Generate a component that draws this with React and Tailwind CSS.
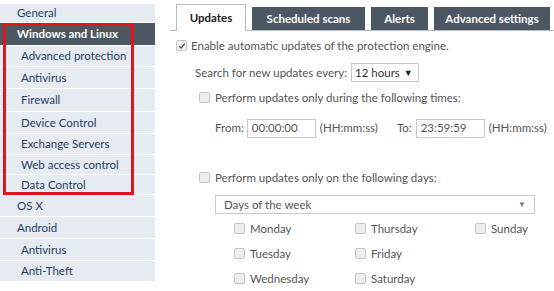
import React from "react";

const navItems = [
  { label: "General", h: 18, indent: "pl-[17px]" },
  { label: "Windows and Linux", h: 22, indent: "pl-[17px]", active: true },
  { label: "Advanced protection", h: 20, indent: "pl-[21px]" },
  { label: "Antivirus", h: 21, indent: "pl-[21px]" },
  { label: "Firewall", h: 22, indent: "pl-[21px]" },
  { label: "Device Control", h: 21, indent: "pl-[21px]" },
  { label: "Exchange Servers", h: 20, indent: "pl-[21px]" },
  { label: "Web access control", h: 19, indent: "pl-[21px]" },
  { label: "Data Control", h: 19, indent: "pl-[21px]" },
  { label: "OS X", h: 21, indent: "pl-[17px]" },
  { label: "Android", h: 21, indent: "pl-[17px]" },
  { label: "Antivirus", h: 21, indent: "pl-[21px]" },
  { label: "Anti-Theft", h: 20, indent: "pl-[21px]" },
];

const tabs = [
  { label: "Updates", w: "w-[70px]", active: true },
  { label: "Scheduled scans", w: "w-[113px]" },
  { label: "Alerts", w: "w-[57px]" },
  { label: "Advanced settings", w: "w-[116px]" },
];

function Box({ checked }) {
  return (
    <span className="inline-flex h-[11px] w-[11px] shrink-0 items-center justify-center rounded-[2px] border border-[#c4c4c4] bg-[#eeeeee]">
      {checked && (
        <svg width="8" height="8" viewBox="0 0 8 8">
          <path d="M1.2 4.2 L3.1 6 L6.8 1.6" stroke="#555" strokeWidth="1.4" fill="none" />
        </svg>
      )}
    </span>
  );
}

function Day({ label }) {
  return (
    <div className="flex items-center gap-[5px]">
      <Box />
      <span>{label}</span>
    </div>
  );
}

export default function App() {
  return (
    <div
      className="relative flex h-[291px] w-[554px] overflow-hidden bg-white text-[11.5px] text-[#555]"
      style={{ fontFamily: "Lato, 'Open Sans', sans-serif" }}
    >
      <div className="flex w-[155px] shrink-0 flex-col gap-px pt-[4px]">
        {navItems.map((it, i) => (
          <div
            key={i}
            style={{ height: it.h }}
            className={`flex items-center ${it.indent} ${
              it.active
                ? "bg-[#4b5762] font-bold text-white"
                : "bg-[#e6ebf2] text-[#1f3d63]"
            }`}
          >
            {it.label}
          </div>
        ))}
      </div>

      <div className="absolute left-[3px] top-[23px] h-[172px] w-[131px] border-[3px] border-[#e3141c]" />

      <div className="flex flex-1 flex-col pl-[15px]">
        <div className="flex items-end gap-[6px] border-b border-[#b8bcc0] pl-[6px] pt-[4px]">
          {tabs.map((t) =>
            t.active ? (
              <div
                key={t.label}
                className={`${t.w} -mb-px flex h-[27px] items-center justify-center border border-b-0 border-[#b8bcc0] bg-white font-bold text-[#222]`}
              >
                {t.label}
              </div>
            ) : (
              <div
                key={t.label}
                className={`${t.w} flex h-[23px] items-center justify-center bg-[#4b5762] font-bold text-white`}
              >
                {t.label}
              </div>
            )
          )}
        </div>

        <div className="flex flex-col pl-[6px] pt-[6px]">
          <div className="flex items-center gap-[4px]">
            <Box checked />
            <span>Enable automatic updates of the protection engine.</span>
          </div>

          <div className="mt-[9px] flex items-center gap-[4px] pl-[19px]">
            <span>Search for new updates every:</span>
            <span className="flex h-[19px] w-[68px] items-center gap-[4px] border border-[#c9c9c9] pl-[3px] text-[#333]">
              12 hours <span className="text-[9px] text-[#222]">▼</span>
            </span>
          </div>

          <div className="mt-[7px] flex items-center gap-[5px] pl-[23px]">
            <Box />
            <span>Perform updates only during the following times:</span>
          </div>

          <div className="mt-[12px] flex items-center pl-[39px]">
            <span>From:</span>
            <span className="ml-[3px] flex h-[19px] w-[69px] items-center border border-[#c9c9c9] pl-[4px]">
              00:00:00
            </span>
            <span className="ml-[4px]">(HH:mm:ss)</span>
            <span className="ml-[19px]">To:</span>
            <span className="ml-[4px] flex h-[19px] w-[69px] items-center border border-[#c9c9c9] pl-[4px]">
              23:59:59
            </span>
            <span className="ml-[4px]">(HH:mm:ss)</span>
          </div>

          <div className="mt-[31px] flex items-center gap-[5px] pl-[23px]">
            <Box />
            <span>Perform updates only on the following days:</span>
          </div>

          <div className="ml-[39px] mt-[9px] flex h-[19px] w-[320px] items-center justify-between border border-[#c9c9c9] pl-[8px] pr-[8px]">
            <span>Days of the week</span>
            <span className="text-[8px] text-[#777]">▼</span>
          </div>

          <div className="ml-[58px] mt-[6px] grid grid-cols-[121px_120px_80px] gap-y-[8px] leading-[17px]">
            <Day label="Monday" />
            <Day label="Thursday" />
            <Day label="Sunday" />
            <Day label="Tuesday" />
            <Day label="Friday" />
            <div />
            <Day label="Wednesday" />
            <Day label="Saturday" />
          </div>
        </div>
      </div>
    </div>
  );
}
